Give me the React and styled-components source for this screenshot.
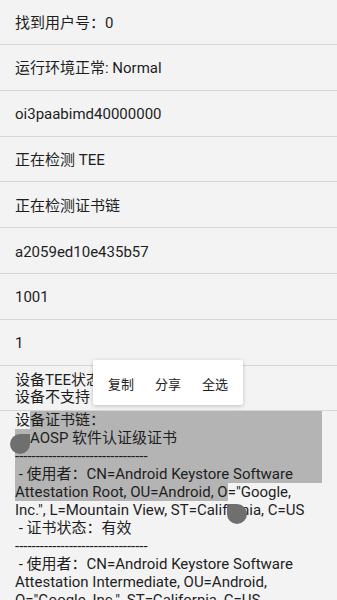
import styled, { createGlobalStyle } from "styled-components";

const GlobalStyle = createGlobalStyle`
    html, body {
        margin: 0;
        padding: 0;
        background: #f3f3f3;
    }
    body {
        font-family: Roboto, "Noto Sans CJK SC", sans-serif;
        color: #1e1e1e;
    }
`;

const Page = styled.div`
    position: relative;
    width: 337px;
    height: 600px;
    overflow: hidden;
    background: #f3f3f3;
`;

const List = styled.div`
    margin-top: -0.8px;
`;

const Row = styled.div`
    box-sizing: border-box;
    min-height: 45.8px;
    padding: 2px 15px 0;
    display: flex;
    flex-direction: column;
    justify-content: center;
    border-bottom: 1px solid #d6d6d6;
    font-size: 15px;
    line-height: ${(p) => p.$lineHeight || "20px"};
    white-space: pre;
`;

const CertBlock = styled.div`
    padding: 0 15px;
    font-size: 15px;
    line-height: 18px;
`;

const Line = styled.div`
    display: flex;
    height: 18px;
    white-space: pre;
    background: ${(p) => (p.$selected ? "#b4b4b4" : "transparent")};
`;

const Sel = styled.span`
    background: #b4b4b4;
    flex: ${(p) => (p.$grow ? 1 : "none")};
`;

const Popup = styled.div`
    position: absolute;
    left: 93px;
    top: 360px;
    width: 150px;
    height: 45px;
    box-sizing: border-box;
    padding: 0 15px;
    display: flex;
    align-items: center;
    gap: 21px;
    background: #ffffff;
    border-radius: 2px;
    box-shadow: 0 1px 4px rgba(0, 0, 0, 0.22);
`;

const MenuItem = styled.span`
    font-size: 13px;
    color: #222;
    padding-top: 2px;
`;

const Handle = styled.div`
    position: absolute;
    width: 20px;
    height: 20px;
    background: #6f6f6f;
    border-radius: ${(p) => (p.$side === "left" ? "50% 0 50% 50%" : "0 50% 50% 50%")};
`;

const LeftHandle = styled(Handle)`
    left: 10px;
    top: 434px;
`;

const RightHandle = styled(Handle)`
    left: 227px;
    top: 504px;
`;

const items = [
    "找到用户号：0",
    "运行环境正常: Normal",
    "oi3paabimd40000000",
    "正在检测 TEE",
    "正在检测证书链",
    "a2059ed10e435b57",
    "1001",
    "1",
];

const dashes = "-".repeat(32);

export default function App() {
    return (
        <Page>
            <GlobalStyle />
            <List>
                {items.map((text, i) => (
                    <Row key={i}>{text}</Row>
                ))}
                <Row $lineHeight="17px">
                    {"设备TEE状态：不支持\n设备不支持 Keystore"}
                </Row>
                <CertBlock>
                    <Line>
                        设<Sel $grow>备证书链：</Sel>
                    </Line>
                    <Line $selected>{"\u3000AOSP 软件认证级证书"}</Line>
                    <Line $selected>{dashes}</Line>
                    <Line $selected>{" - 使用者：CN=Android Keystore Software"}</Line>
                    <Line>
                        <Sel>Attestation Root, OU=Android, O</Sel>="Google,
                    </Line>
                    <Line>Inc.", L=Mountain View, ST=California, C=US</Line>
                    <Line>{" - 证书状态：有效"}</Line>
                    <Line>{dashes}</Line>
                    <Line>{" - 使用者：CN=Android Keystore Software"}</Line>
                    <Line>Attestation Intermediate, OU=Android,</Line>
                    <Line>O="Google, Inc.", ST=California, C=US</Line>
                    <Line>{" - 证书状态：有效"}</Line>
                </CertBlock>
            </List>
            <Popup>
                <MenuItem>复制</MenuItem>
                <MenuItem>分享</MenuItem>
                <MenuItem>全选</MenuItem>
            </Popup>
            <LeftHandle $side="left" />
            <RightHandle $side="right" />
        </Page>
    );
}
